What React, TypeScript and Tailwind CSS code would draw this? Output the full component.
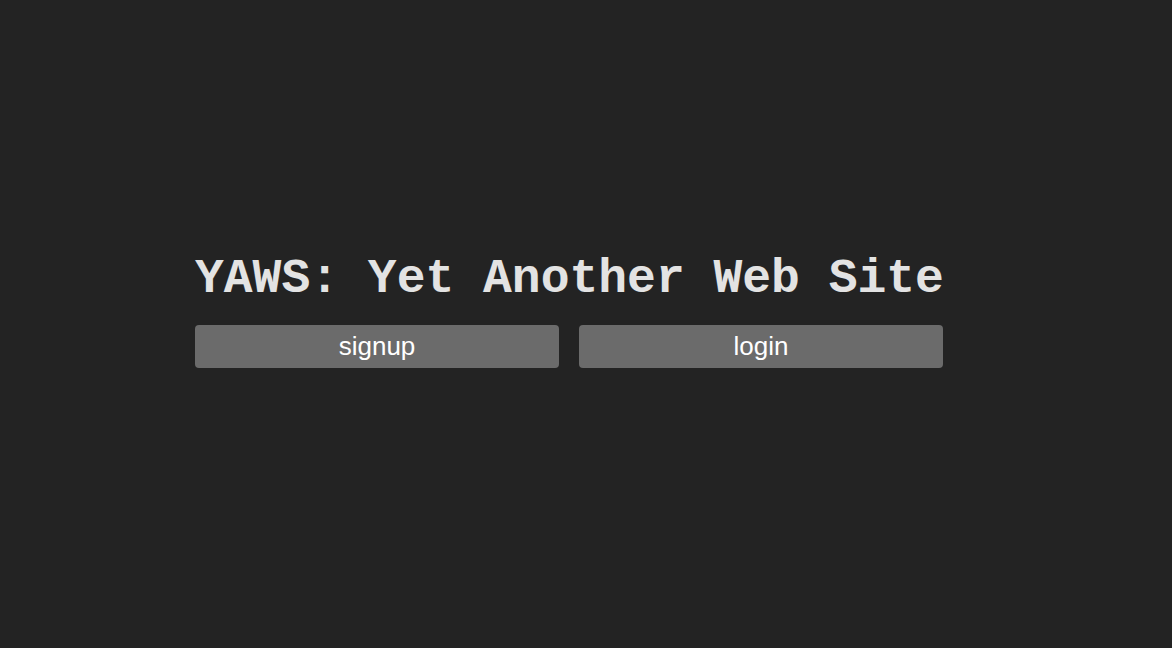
export default function App() {
  return (
    <div className="w-[1172px] h-[648px] bg-[#232323] flex flex-col justify-center pl-[195px] pb-[26px]">
      <div className="w-[748px] flex flex-col">
        <h1 className="text-[48px] leading-[56px] font-bold text-[#e3e3e3] whitespace-nowrap" style={{ fontFamily: '"Liberation Mono", "Courier New", monospace' }}>
          YAWS: Yet Another Web Site
        </h1>
        <div className="mt-[18px] mb-[4px] grid grid-cols-2 gap-[20px]">
          <button className="h-[43px] rounded-[4px] bg-[#6b6b6b] text-white text-[26px] leading-[30px]" style={{ fontFamily: '"Liberation Sans", Arial, sans-serif' }}>signup</button>
          <button className="h-[43px] rounded-[4px] bg-[#6b6b6b] text-white text-[26px] leading-[30px]" style={{ fontFamily: '"Liberation Sans", Arial, sans-serif' }}>login</button>
        </div>
      </div>
    </div>
  );
}
